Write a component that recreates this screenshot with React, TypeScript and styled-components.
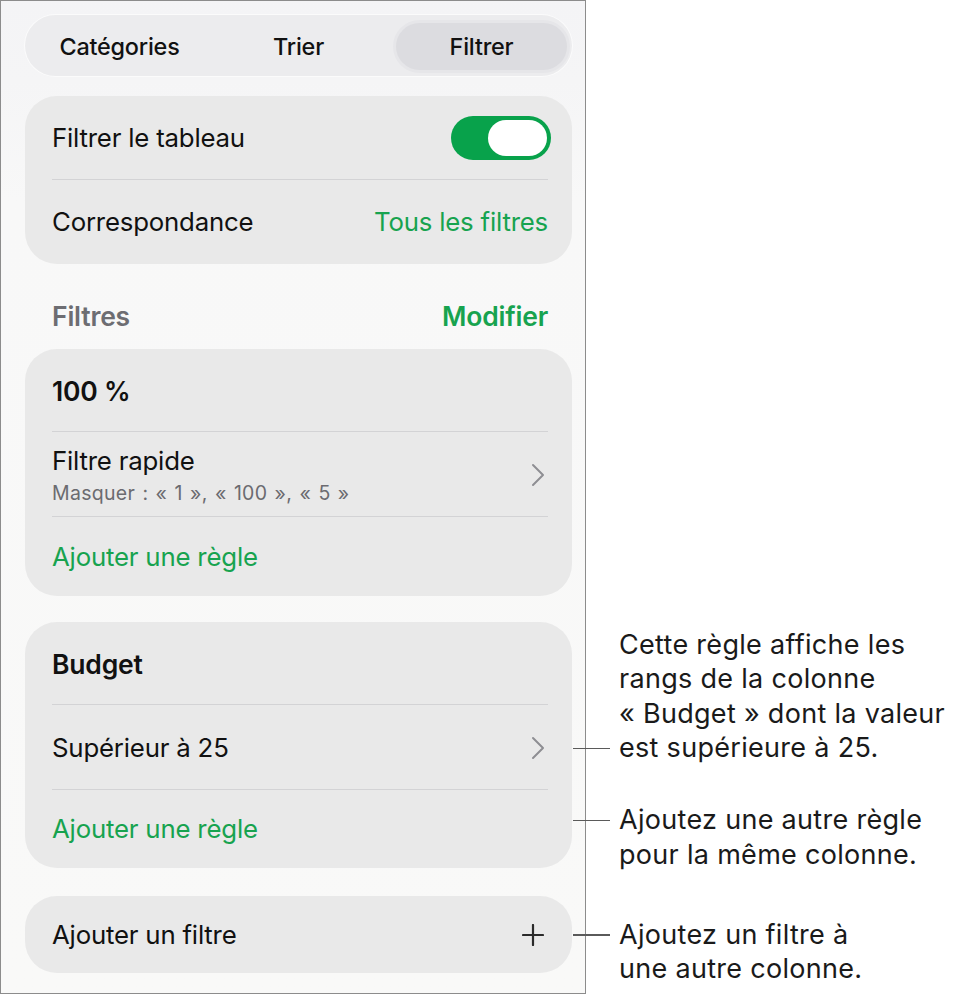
import React from "react";
import styled, { createGlobalStyle } from "styled-components";

const GlobalStyle = createGlobalStyle`
  html, body { margin: 0; padding: 0; background: #ffffff; }
  body { font-family: Inter, "Noto Sans", "Liberation Sans", sans-serif; color: #111; -webkit-font-smoothing: antialiased; }
`;

const GREEN = "#17a34f";

const Page = styled.div`
  display: flex;
  width: 968px;
  height: 995px;
`;

const Panel = styled.div`
  box-sizing: border-box;
  width: 586px;
  height: 994px;
  border: 1px solid #8c8c8c;
  background: linear-gradient(#f4f4f6 0px, #f5f5f6 80px, #f8f8f8 200px, #f9f9f8 100%);
  padding: 14px 13px 0 24px;
  display: flex;
  flex-direction: column;
`;

const Segmented = styled.div`
  display: grid;
  grid-template-columns: 1fr 1fr 1fr;
  height: 61px;
  box-sizing: border-box;
  padding: 8px 5px 6px;
  border-radius: 31px;
  background: #ececee;
  box-shadow: 0 0 0 1px rgba(255, 255, 255, 0.6);
`;

const Segment = styled.div<{ $active?: boolean }>`
  display: flex;
  align-items: center;
  justify-content: center;
  border-radius: 24px;
  font-size: 23.4px;
  font-weight: 500;
  letter-spacing: -0.2px;
  color: #111;
  margin-left: ${(p) => (p.$active ? "8px" : "0")};
  background: ${(p) => (p.$active ? "#dcdce0" : "transparent")};
  box-shadow: ${(p) => (p.$active ? "0 0 0 3px #e6e6e9" : "none")};
`;

const Card = styled.div<{ $mt: number }>`
  position: relative;
  margin-top: ${(p) => p.$mt}px;
  background: #e9e9e9;
  border-radius: 32px;
  display: flex;
  flex-direction: column;
`;

const Row = styled.div<{ $h: number; $divider?: boolean }>`
  position: relative;
  height: ${(p) => p.$h}px;
  box-sizing: border-box;
  padding: 0 24px 0 27px;
  display: flex;
  align-items: center;
  justify-content: space-between;
  &::after {
    content: "";
    display: ${(p) => (p.$divider ? "block" : "none")};
    position: absolute;
    left: 27px;
    right: 24px;
    bottom: 0;
    height: 1.5px;
    background: #d3d3d5;
  }
`;

const Label = styled.span<{ $bold?: boolean; $green?: boolean }>`
  font-size: ${(p) => (p.$bold ? "26.5px" : "25.8px")};
  line-height: 30px;
  font-weight: ${(p) => (p.$bold ? 600 : 400)};
  color: ${(p) => (p.$green ? GREEN : "#111")};
  letter-spacing: -0.2px;
`;

const Stack = styled.div`
  display: flex;
  flex-direction: column;
  gap: 5px;
  margin-top: 2px;
`;

const SubLabel = styled.span`
  font-size: 19.5px;
  line-height: 24px;
  color: #6b6b70;
  letter-spacing: 0.3px;
  word-spacing: 1.5px;
`;

const Toggle = styled.div`
  width: 100px;
  height: 44px;
  margin-right: -3px;
  border-radius: 22px;
  background: #08a24b;
  box-sizing: border-box;
  padding: 4px;
  display: flex;
  justify-content: flex-end;
`;

const Knob = styled.div`
  width: 59px;
  height: 36px;
  border-radius: 18px;
  background: #fff;
`;

const SectionHeader = styled.div`
  display: flex;
  justify-content: space-between;
  align-items: center;
  padding: 37px 24px 0 27px;
  height: 30px;
`;

const SectionTitle = styled.span<{ $green?: boolean }>`
  font-size: 26.5px;
  font-weight: 600;
  color: ${(p) => (p.$green ? GREEN : "#6d6d72")};
  letter-spacing: -0.2px;
`;

const Callout = styled.div<{ $anchor: "first" | "last"; $dy?: number }>`
  position: absolute;
  left: calc(100% + 1px);
  ${(p) => (p.$anchor === "first" ? "top: 50%;" : "bottom: 50%;")}
  margin-top: ${(p) => p.$dy ?? 0}px;
  transform: translateY(${(p) => (p.$anchor === "first" ? "-17px" : "18px")});
  display: flex;
  align-items: ${(p) => (p.$anchor === "first" ? "flex-start" : "flex-end")};
  gap: 9px;
  width: 400px;
`;

const Leader = styled.div`
  flex: none;
  width: 37px;
  height: 1.5px;
  background: #5a5a5a;
  margin: 16.5px 0;
`;

const CalloutText = styled.div`
  font-size: 27px;
  line-height: 34.5px;
  color: #1a1a1a;
  letter-spacing: 0.3px;
  white-space: nowrap;
`;

const IconSlot = styled.span<{ $mr: number }>`
  display: flex;
  margin-right: ${(p) => p.$mr}px;
`;

const Chevron = () => (
  <IconSlot $mr={3}>
    <svg width="14" height="24" viewBox="0 0 14 24" fill="none">
      <path d="M2 2 L12 12 L2 22" stroke="#8e8e93" strokeWidth="2" strokeLinecap="round" strokeLinejoin="round" />
    </svg>
  </IconSlot>
);

const Plus = () => (
  <IconSlot $mr={4}>
    <svg width="22" height="22" viewBox="0 0 22 22" fill="none">
      <path d="M11 1 V21 M1 11 H21" stroke="#2a2a2a" strokeWidth="2.2" strokeLinecap="round" />
    </svg>
  </IconSlot>
);

export default function App() {
  return (
    <Page>
      <GlobalStyle />
      <Panel>
        <Segmented>
          <Segment>Catégories</Segment>
          <Segment>Trier</Segment>
          <Segment $active>Filtrer</Segment>
        </Segmented>

        <Card $mt={20}>
          <Row $h={84} $divider>
            <Label>Filtrer le tableau</Label>
            <Toggle>
              <Knob />
            </Toggle>
          </Row>
          <Row $h={84}>
            <Label>Correspondance</Label>
            <Label $green>Tous les filtres</Label>
          </Row>
        </Card>

        <SectionHeader>
          <SectionTitle>Filtres</SectionTitle>
          <SectionTitle $green>Modifier</SectionTitle>
        </SectionHeader>

        <Card $mt={18}>
          <Row $h={83} $divider>
            <Label $bold>100 %</Label>
          </Row>
          <Row $h={85} $divider>
            <Stack>
              <Label>Filtre rapide</Label>
              <SubLabel>Masquer : « 1 », « 100 », « 5 »</SubLabel>
            </Stack>
            <Chevron />
          </Row>
          <Row $h={79}>
            <Label $green>Ajouter une règle</Label>
          </Row>
        </Card>

        <Card $mt={26}>
          <Row $h={83} $divider>
            <Label $bold>Budget</Label>
          </Row>
          <Row $h={85} $divider>
            <Label>Supérieur à 25</Label>
            <Chevron />
            <Callout $anchor="last">
              <Leader />
              <CalloutText>
                Cette règle affiche les
                <br />
                rangs de la colonne
                <br />« Budget » dont la valeur
                <br />
                est supérieure à 25.
              </CalloutText>
            </Callout>
          </Row>
          <Row $h={78}>
            <Label $green>Ajouter une règle</Label>
            <Callout $anchor="first" $dy={-9}>
              <Leader />
              <CalloutText>
                Ajoutez une autre règle
                <br />
                pour la même colonne.
              </CalloutText>
            </Callout>
          </Row>
        </Card>

        <Card $mt={28}>
          <Row $h={77}>
            <Label>Ajouter un filtre</Label>
            <Plus />
            <Callout $anchor="first">
              <Leader />
              <CalloutText>
                Ajoutez un filtre à
                <br />
                une autre colonne.
              </CalloutText>
            </Callout>
          </Row>
        </Card>
      </Panel>
    </Page>
  );
}
